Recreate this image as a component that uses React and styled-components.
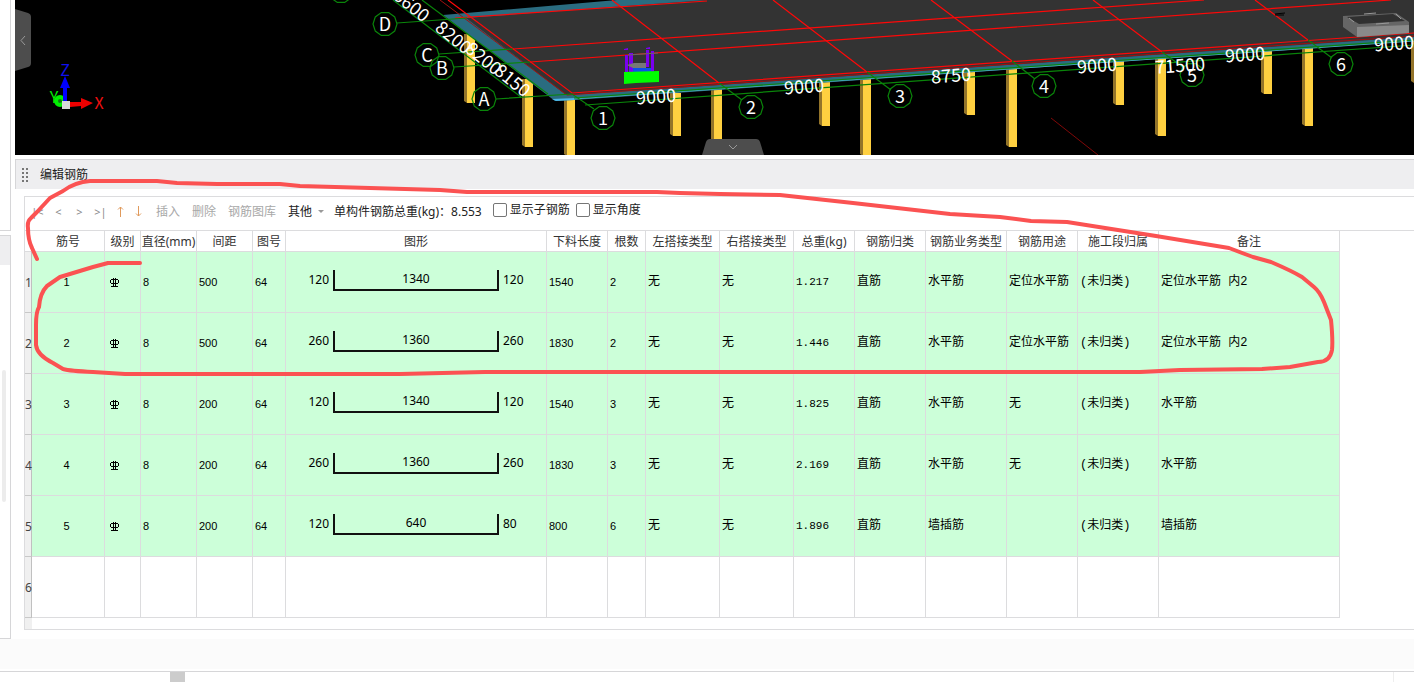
import React, { useState } from 'react';
import styled, { createGlobalStyle } from 'styled-components';

const GlobalStyle = createGlobalStyle`
  * {
    box-sizing: border-box;
  }
  body {
    margin: 0;
    background: #ffffff;
    color: #222222;
    font-family: 'Noto Sans', 'Noto Sans CJK SC', sans-serif;
    font-size: 12px;
    line-height: 18px;
    overflow: hidden;
  }
  button {
    font: inherit;
    color: inherit;
    background: none;
    border: none;
    padding: 0;
  }
`;

const Page = styled.div`
  position: relative;
`;

const Workspace = styled.div`
  display: grid;
  grid-template-columns: 11px minmax(0, 1fr);
  column-gap: 4px;
`;

const SideBar = styled.aside`
  display: flex;
  flex-direction: column;
  gap: 4px;
`;

const SideTop = styled.div`
  height: 231px;
  border-right: 1px solid #d6d6d8;
  border-bottom: 1px solid #d6d6d8;
`;

const SideBottom = styled.div`
  flex: 1;
  border: 1px solid #d6d6d8;
  border-left: none;
`;

const SideHeader = styled.div`
  height: 29px;
  background: #eeeef0;
`;

const SideScroll = styled.div`
  width: 4px;
  height: 132px;
  margin: 105px 0 0 2px;
  border-radius: 2px;
  background: #ececec;
`;

const Main = styled.main`
  display: flex;
  flex-direction: column;
`;

const Viewport = styled.section`
  position: relative;
  height: 155px;
  background: #000000;
  overflow: hidden;
`;

const Scene = styled.svg`
  display: block;
  width: 100%;
  height: 155px;
  font-family: 'Noto Sans CJK SC', sans-serif;
`;

const SideTab = styled.button`
  position: absolute;
  left: 0;
  top: 9px;
  width: 16px;
  height: 62px;

  svg {
    display: block;
  }
`;

const BottomTab = styled.button`
  position: absolute;
  left: 687px;
  bottom: 0;
  width: 62px;
  height: 16px;

  svg {
    display: block;
  }
`;

const Dock = styled.section`
  margin-top: 4px;
  padding-bottom: 9px;
`;

const DockHeader = styled.header`
  display: flex;
  align-items: center;
  gap: 12px;
  height: 30px;
  padding-left: 6px;
  border-top: 1px solid #d6d6d8;
  border-left: 1px solid #d6d6d8;
  background: #eeeef0;
`;

const Grip = styled.svg`
  width: 6px;
  height: 14px;
`;

const Title = styled.h1`
  margin: 0;
  font-size: 12px;
  font-weight: 400;
`;

const Panel = styled.div`
  margin: 7px 0 0 9px;
  border: 1px solid #dcdcde;
  border-right: none;
  overflow: hidden;
`;

const Toolbar = styled.div`
  display: flex;
  align-items: center;
  height: 33px;
  padding: 0 0 4px 2px;
  white-space: nowrap;
`;

const NavButton = styled.button`
  width: 21px;
  height: 18px;
  color: #8a8a8a;
  font-size: 11px;
  text-align: center;
`;

const ArrowButton = styled.button`
  display: flex;
  align-items: center;
  justify-content: center;
  width: 18px;
  height: 18px;
`;

const ToolButton = styled.button`
  margin-left: ${(props) => (props.$first ? '9px' : '12px')};
  color: ${(props) => (props.$dim ? '#a8a8a8' : '#222222')};
`;

const Caret = styled.span`
  margin: 0 10px 0 6px;
  border: 3px solid transparent;
  border-top-color: #999999;
  border-bottom: none;
`;

const Checks = styled.div`
  display: flex;
  align-self: flex-start;
  align-items: center;
  gap: 6px;
  height: 26px;
  margin-left: 11px;
`;

const CheckLabel = styled.label`
  display: flex;
  align-items: center;
  gap: 3px;
`;

const CheckBox = styled.input`
  appearance: none;
  width: 14px;
  height: 14px;
  margin: 0;
  border: 1px solid #767676;
  border-radius: 2px;
  background: #ffffff;

  &:checked {
    background: #4a90e2;
  }
`;

const Table = styled.table`
  table-layout: fixed;
  width: 1315px;
  border-collapse: separate;
  border-spacing: 0;
`;

const TableWrap = styled.div`
  border-top: 1px solid #dcdcde;
`;

const HeadCell = styled.th`
  height: 21px;
  padding: 2px 0 0;
  border-right: 1px solid #dcdcde;
  border-bottom: 1px solid #dcdcde;
  font-weight: 400;
  white-space: nowrap;
  color: #333333;
`;

const GutterHead = styled.td`
  padding: 0;
  border-bottom: 1px solid #dcdcde;
`;

const Gutter = styled.th`
  height: 61px;
  padding: 2px 0 0;
  border-right: 1px solid #c0c0c0;
  border-bottom: 1px solid #c8c8c8;
  background: #f0f0f0;
  color: #444444;
  font-weight: 400;
  text-align: left;
`;

const cellPadding = {
  text: '0 0 0 2px',
  number: '0 0 1px 2px',
  mono: '0 0 1px 2px',
  shape: '0 0 4px',
};

const Cell = styled.td`
  height: 61px;
  padding: ${(props) => (props.$center ? '0 3px 1px 0' : cellPadding[props.$kind])};
  border-right: 1px solid #dcdcde;
  border-bottom: 1px solid #dcdcde;
  background: ${(props) => (props.$filled ? '#ccffd9' : '#ffffff')};
  color: #000000;
  font-family: ${(props) =>
    props.$kind === 'number'
      ? "'Liberation Sans', sans-serif"
      : "'Liberation Mono', 'Noto Sans CJK SC', monospace"};
  font-size: ${(props) => (props.$kind === 'text' ? '12px' : '11px')};
  text-align: ${(props) => (props.$center ? 'center' : 'left')};
  white-space: nowrap;
`;

const GutterFoot = styled.div`
  width: 7px;
  height: 11px;
  background: #f0f0f0;
`;

const Grade = styled.svg`
  display: block;
  width: 11px;
  height: 11px;
  margin-left: 3px;
`;

const Shape = styled.div`
  display: flex;
  align-items: center;
  gap: 4px;
  font-family: 'Noto Sans', sans-serif;
  font-size: 12px;
`;

const ShapeEnd = styled.span`
  width: 43px;
  text-align: right;

  &:last-child {
    text-align: left;
  }
`;

const ShapeBar = styled.span`
  width: 166px;
  height: 21px;
  border: 2px solid #111111;
  border-top: none;
  text-align: center;
`;

const StatusStrip = styled.div`
  height: 30px;
  background: #fbfbfb;
`;

const Footer = styled.footer`
  display: flex;
  justify-content: space-between;
  height: 11px;
  margin-top: 2px;
  padding: 0 20px 0 170px;
  border-top: 1px solid #d6d6d8;
`;

const FooterThumb = styled.div`
  width: 15px;
  background: #cccccc;
`;

const FooterEdge = styled.div`
  width: 1px;
  background: #eeeeee;
`;

const Markup = styled.svg`
  position: absolute;
  left: 0;
  top: 0;
  width: 1414px;
  height: 682px;
  pointer-events: none;
`;

const columns = [
  { key: 'no', label: '筋号', width: 73, kind: 'number', center: true },
  { key: 'grade', label: '级别', width: 36, kind: 'text' },
  { key: 'dia', label: '直径(mm)', width: 56, kind: 'number' },
  { key: 'gap', label: '间距', width: 56, kind: 'number' },
  { key: 'fig', label: '图号', width: 33, kind: 'number' },
  { key: 'shape', label: '图形', width: 261, kind: 'shape' },
  { key: 'length', label: '下料长度', width: 61, kind: 'number' },
  { key: 'count', label: '根数', width: 38, kind: 'number' },
  { key: 'left', label: '左搭接类型', width: 74, kind: 'text' },
  { key: 'right', label: '右搭接类型', width: 74, kind: 'text' },
  { key: 'weight', label: '总重(kg)', width: 61, kind: 'mono' },
  { key: 'kind', label: '钢筋归类', width: 71, kind: 'text' },
  { key: 'biz', label: '钢筋业务类型', width: 81, kind: 'text' },
  { key: 'use', label: '钢筋用途', width: 71, kind: 'text' },
  { key: 'section', label: '施工段归属', width: 81, kind: 'text' },
  { key: 'note', label: '备注', width: 181, kind: 'text' },
];

const base = { dia: 8, fig: 64, left: '无', right: '无', kind: '直筋', section: '(未归类)' };

const rows = [
  { ...base, no: 1, gap: 500, shape: [120, 1340, 120], length: 1540, count: 2, weight: '1.217', biz: '水平筋', use: '定位水平筋', note: '定位水平筋 内2' },
  { ...base, no: 2, gap: 500, shape: [260, 1360, 260], length: 1830, count: 2, weight: '1.446', biz: '水平筋', use: '定位水平筋', note: '定位水平筋 内2' },
  { ...base, no: 3, gap: 200, shape: [120, 1340, 120], length: 1540, count: 3, weight: '1.825', biz: '水平筋', use: '无', note: '水平筋' },
  { ...base, no: 4, gap: 200, shape: [260, 1360, 260], length: 1830, count: 3, weight: '2.169', biz: '水平筋', use: '无', note: '水平筋' },
  { ...base, no: 5, gap: 200, shape: [120, 640, 80], length: 800, count: 6, weight: '1.896', biz: '墙插筋', use: '', note: '墙插筋' },
  null,
];

// x, top, bottom
const pillars = [
  [464, 34, 103],
  [522, 79, 147],
  [564, 99, 156],
  [670, 93, 136],
  [711, 89, 156],
  [819, 81, 126],
  [860, 78, 156],
  [964, 71, 115],
  [1006, 67, 147],
  [1113, 61, 105],
  [1155, 57, 136],
  [1261, 50, 94],
  [1302, 47, 126],
  [1411, 39, 83],
];

const bubbles = [
  ['D', 385, 24],
  ['C', 427, 55],
  ['B', 442, 68],
  ['A', 484, 99],
  ['1', 603, 118],
  ['2', 751, 107],
  ['3', 900, 96],
  ['4', 1044, 86],
  ['5', 1192, 75],
  ['6', 1341, 64],
  ['', 341, -9],
];

// text, centre x, centre y, angle
const dims = [
  ['6600', 412, 5, 39],
  ['8200', 454, 37, 39],
  ['8200', 484, 58, 39],
  ['8150', 513, 80, 39],
  ['9000', 656, 96, -4],
  ['9000', 804, 86, -4],
  ['8750', 951, 75, -4],
  ['9000', 1097, 65, -4],
  ['71500', 1180, 65, -4],
  ['9000', 1245, 54, -4],
  ['9000', 1394, 43, -4],
];

const decagon = (cx, cy, r) =>
  Array.from({ length: 10 }, (_, i) => {
    const a = (Math.PI * 2 * i) / 10;
    return `${(cx + r * Math.cos(a)).toFixed(1)},${(cy + r * Math.sin(a)).toFixed(1)}`;
  }).join(' ');

const Model = () => (
  <Scene viewBox="15 0 1399 155" preserveAspectRatio="xMinYMin slice">
    {pillars.map(([x, top, bottom]) => (
      <g key={x}>
        <path d={`M${x} ${top}h4V${bottom}h-1l-3-2z`} fill="#93742a" />
        <path d={`M${x + 3} ${top}h8V${bottom}h-8z`} fill="#ffd040" />
      </g>
    ))}
    <path d="M443 15L617 0H1414V41L690 92L574 100L555 101z" fill="#2a6c80" />
    <path d="M466 18L707 0H1414V37L690 87L566 95z" fill="#333333" />
    <path d="M552 99L576 98L574 100L556 101z" fill="#4db8e8" />
    <path d="M574 99L1414 41" stroke="#43a7b5" fill="none" />

    <g stroke="#a01010" fill="none">
      <path d="M440 0L567 95L1414 36" />
      <path d="M1051 118L1098 155" stroke="#800808" />
    </g>
    <g stroke="#ff0808" strokeWidth="1.2" fill="none">
      <path d="M448 0L572 93L1414 33" />
      <path d="M455 18L707 1" />
      <path d="M513 49L1204 0" />
      <path d="M530 62L1391 0" />
      <path d="M612 0L719 83" />
      <path d="M773 0L867 72" />
      <path d="M931 0L1012 61" />
      <path d="M1093 0L1162 52" />
      <path d="M1255 0L1308 40" />
    </g>
    <g stroke="#0a850a" strokeWidth="1.2" fill="none">
      <path d="M393 0L521 97" />
      <path d="M422 0L548 94" />
      <path d="M397 23L467 18" />
      <path d="M439 54L513 49" />
      <path d="M454 67L530 62" />
      <path d="M496 99L572 94L594 109" />
      <path d="M574 98L1414 40" />
      <path d="M585 105L1414 45" />
      <path d="M719 83L742 100" />
      <path d="M867 72L891 90" />
      <path d="M1012 61L1035 79" />
      <path d="M1162 52L1184 68" />
      <path d="M1308 40L1332 58" />
      {bubbles.map(([name, x, y]) => (
        <polygon key={name} points={decagon(x, y, 12)} />
      ))}
    </g>

    <g fill="#7a00f0">
      <path d="M625 55h3v17h-3zM629 53h4v19h-4zM646 50h3v17h-3zM651 51h3v21h-3z" />
      <path d="M624 49l4-1v2h-4zM646 48l4-1v2h-4z" />
    </g>
    <path d="M628 55L658 53" stroke="#666666" fill="none" />
    <path d="M627 65l7-2h12v5h-13z" fill="#777777" />
    <path d="M633 68h18v4h-18z" fill="#0a50e8" />
    <path d="M624 72L659 71V82L636 83L624 84z" fill="#00ff00" />

    <path d="M1275 15H1284M1275 14L1285 13" stroke="#000000" fill="none" />
    <path d="M1343 16L1396 13L1409 22V33L1357 37L1343 27z" fill="#666666" />
    <path d="M1347 17L1393 14L1405 21L1359 24z" fill="#303030" />
    <path d="M1357 27L1409 25V33L1357 37z" fill="#8a8a8a" />
    <path d="M1349 18l5 4M1396 14l5 5M1364 14l12-1M1376 24l13-1" stroke="#999999" fill="none" />

    <g fill="#ffffff" fontSize="18" textAnchor="middle">
      {dims.map(([text, x, y, angle], i) => (
        <text key={i} transform={`translate(${x} ${y}) rotate(${angle})`} y="7">
          {text}
        </text>
      ))}
      {bubbles.map(([name, x, y]) => (
        <text key={name} x={x} y={y + 7}>
          {name}
        </text>
      ))}
    </g>

    <circle cx="60" cy="101" r="4" stroke="#00f000" strokeWidth="4" fill="#117711" />
    <path d="M63 102V88H60L65 76L70 88H67V102z" fill="#0000ff" />
    <path d="M70 102L81 102V98L93 103L81 109V106L70 107z" fill="#ee0000" />
    <path d="M62 101h8v8h-8z" fill="#d8d8d8" />
    <g fontSize="16" textAnchor="middle">
      <text x="65" y="76" fill="#1010ee">Z</text>
      <text x="54" y="103" fill="#00f000">Y</text>
      <text x="99" y="109" fill="#ee1010">X</text>
    </g>
  </Scene>
);

const GradeMark = () => (
  <Grade viewBox="0 0 11 11" role="img" aria-label="三级钢">
    <g stroke="#000000" fill="none" shapeRendering="crispEdges">
      <path d="M3.500 1V10M5.500 1V10M1 9.500H8" />
      <path d="M1 2.500H8M1 6.500H8M0.500 3V6M8.500 3V6" />
    </g>
  </Grade>
);

const renderValue = (column, row) => {
  if (!row) {
    return null;
  }
  if (column.key === 'grade') {
    return <GradeMark />;
  }
  if (column.key === 'shape') {
    const [start, middle, end] = row.shape;
    return (
      <Shape>
        <ShapeEnd>{start}</ShapeEnd>
        <ShapeBar>{middle}</ShapeBar>
        <ShapeEnd>{end}</ShapeEnd>
      </Shape>
    );
  }
  return row[column.key];
};

const RebarTable = () => (
  <TableWrap>
    <Table>
      <colgroup>
        <col width="7" />
        {columns.map((column) => (
          <col key={column.key} width={column.width} />
        ))}
      </colgroup>
      <thead>
        <tr>
          <GutterHead />
          {columns.map((column) => (
            <HeadCell key={column.key} scope="col">
              {column.label}
            </HeadCell>
          ))}
        </tr>
      </thead>
      <tbody>
        {rows.map((row, i) => (
          <tr key={i}>
            <Gutter scope="row">{i + 1}</Gutter>
            {columns.map((column) => (
              <Cell
                key={column.key}
                $kind={column.kind}
                $center={column.center}
                $filled={!!row}
              >
                {renderValue(column, row)}
              </Cell>
            ))}
          </tr>
        ))}
      </tbody>
    </Table>
    <GutterFoot />
  </TableWrap>
);

const EditToolbar = () => {
  const [showChild, setShowChild] = useState(false);
  const [showAngle, setShowAngle] = useState(false);

  return (
    <Toolbar>
      <NavButton type="button">|&lt;</NavButton>
      <NavButton type="button">&lt;</NavButton>
      <NavButton type="button">&gt;</NavButton>
      <NavButton type="button">&gt;|</NavButton>
      <ArrowButton type="button" aria-label="上移">
        <svg width="7" height="11" viewBox="0 0 7 11">
          <path d="M3.500 11V1M1 3.500L3.500 1L6 3.500" stroke="#e09a5c" fill="none" />
        </svg>
      </ArrowButton>
      <ArrowButton type="button" aria-label="下移">
        <svg width="7" height="11" viewBox="0 0 7 11">
          <path d="M3.500 0V10M1 7.500L3.500 10L6 7.500" stroke="#e09a5c" fill="none" />
        </svg>
      </ArrowButton>
      <ToolButton type="button" $dim $first>插入</ToolButton>
      <ToolButton type="button" $dim>删除</ToolButton>
      <ToolButton type="button" $dim>钢筋图库</ToolButton>
      <ToolButton type="button">其他</ToolButton>
      <Caret />
      <span>单构件钢筋总重(kg)：8.553</span>
      <Checks>
        <CheckLabel>
          <CheckBox
            type="checkbox"
            checked={showChild}
            onChange={(e) => setShowChild(e.target.checked)}
          />
          显示子钢筋
        </CheckLabel>
        <CheckLabel>
          <CheckBox
            type="checkbox"
            checked={showAngle}
            onChange={(e) => setShowAngle(e.target.checked)}
          />
          显示角度
        </CheckLabel>
      </Checks>
    </Toolbar>
  );
};

const App = () => (
  <Page>
    <GlobalStyle />
    <Workspace>
      <SideBar>
        <SideTop />
        <SideBottom>
          <SideHeader />
          <SideScroll />
        </SideBottom>
      </SideBar>
      <Main>
        <Viewport>
          <Model />
          <SideTab type="button" aria-label="收起侧栏">
            <svg width="16" height="62" viewBox="0 0 16 62">
              <path d="M0 0L13 4Q16 5 16 8V54Q16 57 13 58L0 62z" fill="#4d4d4d" />
              <path d="M10 27L6 31.500L10 36" stroke="#999999" fill="none" />
            </svg>
          </SideTab>
          <BottomTab type="button" aria-label="收起面板">
            <svg width="62" height="16" viewBox="0 0 62 16">
              <path d="M0 16L4 3Q5 0 8 0H54Q57 0 58 3L62 16z" fill="#4d4d4d" />
              <path d="M27 6L31 10L35 6" stroke="#999999" fill="none" />
            </svg>
          </BottomTab>
        </Viewport>
        <Dock>
          <DockHeader>
            <Grip viewBox="0 0 6 14">
              <path
                d="M0 1H6M0 5H6M0 9H6M0 13H6"
                stroke="#777777"
                strokeWidth="2"
                strokeDasharray="2 2"
              />
            </Grip>
            <Title>编辑钢筋</Title>
          </DockHeader>
          <Panel>
            <EditToolbar />
            <RebarTable />
          </Panel>
        </Dock>
      </Main>
    </Workspace>
    <StatusStrip />
    <Footer>
      <FooterThumb />
      <FooterEdge />
    </Footer>
    {/* red pen stroke round the toolbar and the first two rows */}
    <Markup viewBox="0 0 1414 682">
      <path
        d="M37 259L32 248Q28 240 28 228Q27 221 31 218L37 212L50 198L63 191Q75 182 90 181H157L177 183L217 184H280L300 186L370 188L440 190L467 192H657L680 193L720 194L780 195L853 203L950 214L1000 217L1031 221L1067 222L1156 236L1229 248L1253 257L1271 262Q1292 271 1302 277L1314 287Q1320 292 1324 302L1331 320Q1333 340 1332 350Q1330 362 1318 362L1290 367L1262 369L1180 370L1140 372H485L400 374H125L93 372Q70 371 63 369L53 363Q37 355 36 345V325Q36 312 39 307Q40 293 47 286L60 277L93 267L108 263H140"
        stroke="#fb5252"
        strokeWidth="4"
        strokeLinecap="round"
        strokeLinejoin="round"
        fill="none"
      />
    </Markup>
  </Page>
);

export default App;
